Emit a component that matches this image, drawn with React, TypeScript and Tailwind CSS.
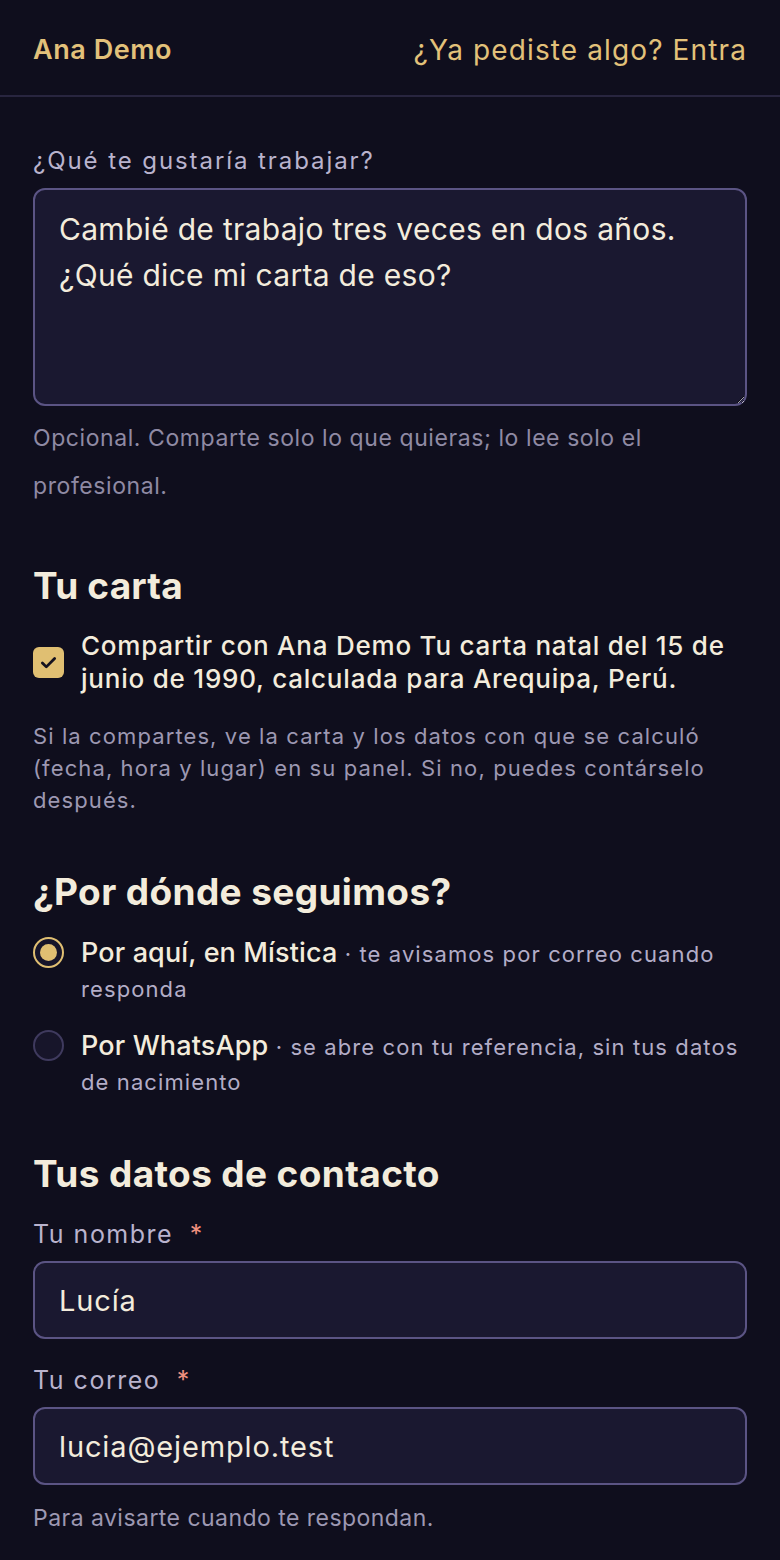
import { useState } from "react";

const font = { fontFamily: "Inter, 'Noto Sans', sans-serif" };

export default function App() {
  const [share, setShare] = useState(true);
  const [channel, setChannel] = useState("mistica");

  return (
    <div className="min-h-[1560px] bg-[#0f0e1d] text-[#f3ecdc]" style={font}>
      {/* Header */}
      <header className="flex items-center justify-between h-[97px] pt-[5px] px-[33px] border-b-2 border-[#28253f]">
        <span className="text-[27px] font-semibold text-[#e2c17a] tracking-[0.02em]">Ana Demo</span>
        <a className="text-[28px] text-[#e2c17a] tracking-[0.04em]">¿Ya pediste algo? Entra</a>
      </header>

      <main className="px-[33px] pt-[48px]">
        {/* Question */}
        <label className="block text-[24px] text-[#b9b3cd] leading-[32px] tracking-[0.08em]">¿Qué te gustaría trabajar?</label>
        <textarea
          className="mt-[11px] block w-full h-[218px] rounded-[12px] border-2 border-[#5b5484] bg-[#1a1830] px-[24px] pt-[16px] text-[30px] leading-[46px] tracking-[0.01em] text-[#f3ecdc] outline-none"
          defaultValue={"Cambié de trabajo tres veces en dos años. ¿Qué dice mi carta de eso?"}
        />
        <p className="mt-[8px] text-[23px] leading-[48px] text-[#8f8aa4] tracking-[0.025em]">
          Opcional. Comparte solo lo que quieras; lo lee solo el profesional.
        </p>

        {/* Tu carta */}
        <h2 className="mt-[54px] text-[37px] font-bold leading-[44px] tracking-[0.005em]">Tu carta</h2>
        <button
          onClick={() => setShare(!share)}
          className="mt-[21px] flex items-start gap-[17px] text-left"
        >
          <span className="mt-[18px] flex-shrink-0 w-[31px] h-[31px] rounded-[6px] bg-[#e0bf72] flex items-center justify-center">
            {share && (
              <svg width="21" height="21" viewBox="0 0 24 24" fill="none" stroke="#14121f" strokeWidth="3.2" strokeLinecap="round" strokeLinejoin="round">
                <path d="M5 12.5l4.5 4.5L19 7.5" />
              </svg>
            )}
          </span>
          <span className="block text-[26px] font-medium leading-[33px] tracking-[0.03em] text-[#f3ecdc]">
            Compartir con Ana Demo Tu carta natal del 15 de junio de 1990, calculada para Arequipa, Perú.
          </span>
        </button>
        <p className="mt-[25px] text-[22px] leading-[32px] tracking-[0.05em] text-[#9d98b2]">
          Si la compartes, ve la carta y los datos con que se calculó (fecha, hora y lugar) en su panel. Si no, puedes contárselo después.
        </p>

        {/* Canal */}
        <h2 className="mt-[54px] text-[37px] font-bold leading-[44px] tracking-[0.01em]">¿Por dónde seguimos?</h2>
        <div className="mt-[21px] flex flex-col gap-[21px]">
          {[
            { id: "mistica", title: "Por aquí, en Mística", note: "te avisamos por correo cuando responda" },
            { id: "whatsapp", title: "Por WhatsApp", note: "se abre con tu referencia, sin tus datos de nacimiento" },
          ].map((o) => (
            <button key={o.id} onClick={() => setChannel(o.id)} className="flex items-start gap-[17px] text-left leading-[35px]">
              <span
                className={`mt-[2px] flex-shrink-0 w-[31px] h-[31px] rounded-full border-2 flex items-center justify-center bg-[#17152a] ${
                  channel === o.id ? "border-[#e0bf72]" : "border-[#3f3a5e]"
                }`}
              >
                {channel === o.id && <span className="w-[17px] h-[17px] rounded-full bg-[#e0bf72]" />}
              </span>
              <span className="block text-[22px] leading-[35px]">
                <span className="text-[27px] font-medium text-[#f3ecdc] tracking-[0.005em]">{o.title}</span>
                <span className="text-[#b3adc7] tracking-[0.05em]"> · {o.note}</span>
              </span>
            </button>
          ))}
        </div>

        {/* Contacto */}
        <h2 className="mt-[52px] text-[37px] font-bold leading-[44px] tracking-[0.01em]">Tus datos de contacto</h2>
        <label className="mt-[22px] block text-[25px] leading-[32px] tracking-[0.06em] text-[#b9b3cd]">
          Tu nombre <span className="ml-[8px] text-[#f0917f]">*</span>
        </label>
        <input
          defaultValue="Lucía"
          className="mt-[11px] block w-full h-[78px] rounded-[12px] border-2 border-[#5b5484] bg-[#1a1830] px-[24px] text-[29px] tracking-[0.03em] text-[#f3ecdc] outline-none"
        />
        <label className="mt-[25px] block text-[25px] leading-[32px] tracking-[0.06em] text-[#b9b3cd]">
          Tu correo <span className="ml-[8px] text-[#f0917f]">*</span>
        </label>
        <input
          defaultValue="lucia@ejemplo.test"
          className="mt-[11px] block w-full h-[78px] rounded-[12px] border-2 border-[#5b5484] bg-[#1a1830] px-[24px] text-[29px] tracking-[0.03em] text-[#f3ecdc] outline-none"
        />
        <p className="mt-[18px] text-[23px] leading-[30px] tracking-[0.02em] text-[#9d98b2]">Para avisarte cuando te respondan.</p>
      </main>
    </div>
  );
}
